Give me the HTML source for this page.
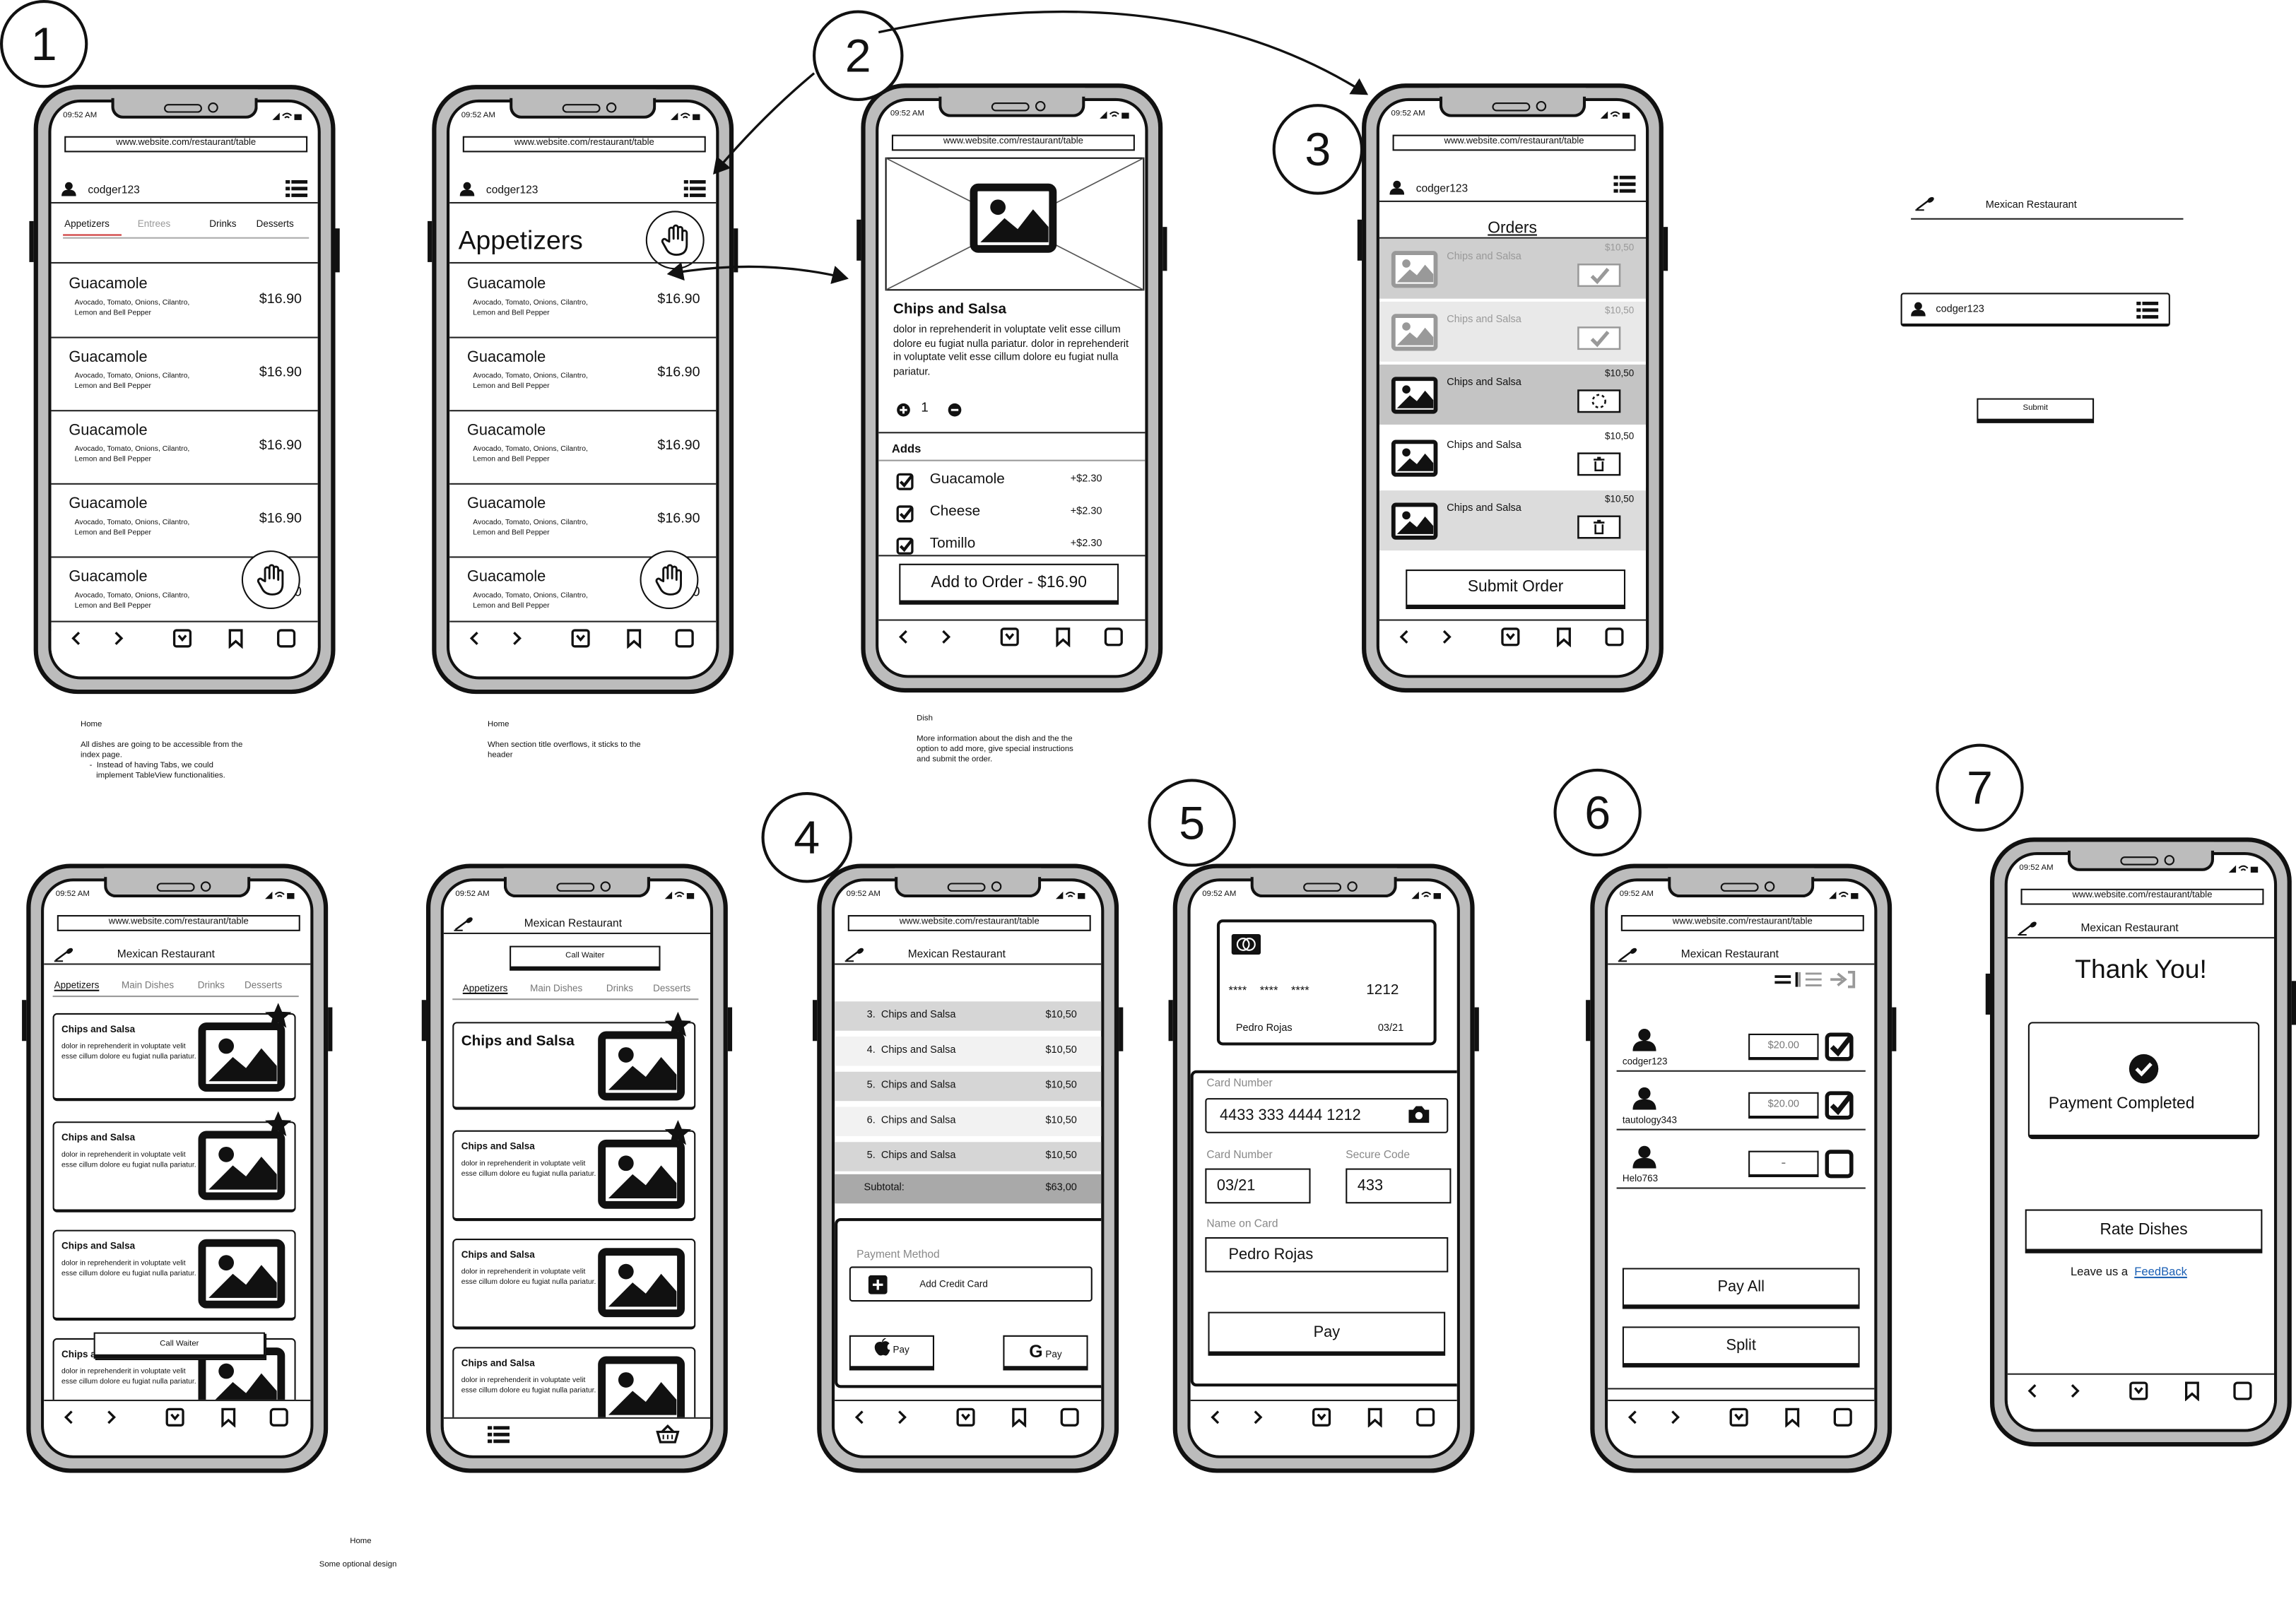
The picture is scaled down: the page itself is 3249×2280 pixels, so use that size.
<!DOCTYPE html>
<html><head><meta charset="utf-8">
<style>
html,body{margin:0;padding:0;background:#fff;width:3249px;height:2280px;overflow:hidden}
#w{position:absolute;left:0;top:0;width:1568px;height:1100px;transform:scale(2.0721);transform-origin:0 0;font-family:"Liberation Sans",sans-serif;color:#111}
.a{position:absolute;white-space:nowrap}
.ph{position:absolute;width:206px;height:416px;box-sizing:border-box;border:3px solid #111;border-radius:30px;background:#bcbcbc}
.sc{position:absolute;left:7px;top:7px;width:186px;height:396px;box-sizing:border-box;border:2px solid #111;border-radius:22px;background:#fff;overflow:hidden}
.in{position:absolute;left:0;top:-4px;width:186px;height:400px}
.ln{position:absolute;height:0;border-top:1.5px solid #222}
.bx{position:absolute;box-sizing:border-box;border:1.5px solid #111;background:#fff}
.btn{position:absolute;box-sizing:border-box;border:1.5px solid #111;border-bottom-width:3px;background:#fff;text-align:center}
.circ{position:absolute;border:2px solid #111;border-radius:50%;text-align:center;font-size:32px;background:#fff}
.note{position:absolute;font-size:5.5px;line-height:7px}
</style></head><body><div id="w"></div>
<script>
var W=document.getElementById('w'),H='';
function T(x,y,s,fs,ex){return '<div class="a" style="left:'+x+'px;top:'+y+'px;font-size:'+fs+'px;'+(ex||'')+'">'+s+'</div>'}
function L(x,y,w,ex){return '<div class="ln" style="left:'+x+'px;top:'+y+'px;width:'+w+'px;'+(ex||'')+'"></div>'}
function R(x,y,w,h,ex){return '<div class="a" style="left:'+x+'px;top:'+y+'px;width:'+w+'px;height:'+h+'px;'+(ex||'')+'"></div>'}
function B(x,y,w,h,s,fs,ex){return '<div class="btn" style="left:'+x+'px;top:'+y+'px;width:'+w+'px;height:'+h+'px;font-size:'+fs+'px;line-height:'+(h-4)+'px;'+(ex||'')+'">'+s+'</div>'}
function IMG(x,y,w,h,c){c=c||'#111';return '<svg class="a" style="left:'+x+'px;top:'+y+'px" width="'+w+'" height="'+h+'" viewBox="0 0 40 32"><rect x="2" y="2" width="36" height="28" rx="2" fill="#fff" stroke="'+c+'" stroke-width="3.5"/><circle cx="13" cy="11" r="3.5" fill="'+c+'"/><path d="M5 27 L16 16 L22 21 L29 12 L36 20 L36 27Z" fill="'+c+'"/></svg>'}
function USER(x,y,s){s=s||10;return '<svg class="a" style="left:'+x+'px;top:'+y+'px" width="'+s+'" height="'+s+'" viewBox="0 0 10 10"><circle cx="5" cy="3" r="2.6" fill="#111"/><path d="M0 10 Q0 5.5 5 5.5 Q10 5.5 10 10Z" fill="#111"/></svg>'}
function MENU(x,y){return '<svg class="a" style="left:'+x+'px;top:'+y+'px" width="15" height="12" viewBox="0 0 15 12"><g fill="#111"><rect x="0" y="0" width="3" height="2.4"/><rect x="4" y="0" width="11" height="2.4"/><rect x="0" y="4.6" width="3" height="2.4"/><rect x="4" y="4.6" width="11" height="2.4"/><rect x="0" y="9.2" width="3" height="2.4"/><rect x="4" y="9.2" width="11" height="2.4"/></g></svg>'}
function SPOON(x,y){return '<svg class="a" style="left:'+x+'px;top:'+y+'px" width="14" height="10" viewBox="0 0 14 10"><path d="M1 9 L9 3" stroke="#111" stroke-width="1.2"/><ellipse cx="10.5" cy="2.5" rx="2.5" ry="1.6" fill="#111" transform="rotate(-35 10.5 2.5)"/><path d="M0 9.5 L6 9.5" stroke="#111"/></svg>'}
function HAND(cx,cy){return '<div class="a" style="left:'+(cx-20)+'px;top:'+(cy-20)+'px;width:38px;height:38px;border:1.5px solid #111;border-radius:50%;background:#fff"></div><svg class="a" style="left:'+(cx-10)+'px;top:'+(cy-11)+'px" width="20" height="22" viewBox="0 0 20 22"><path d="M6 12 V4 a1.5 1.5 0 0 1 3 0 V10 V2.5 a1.5 1.5 0 0 1 3 0 V10 V3.5 a1.5 1.5 0 0 1 3 0 V11 V6 a1.5 1.5 0 0 1 3 0 V14 Q18 21 11 21 Q6 21 4 17 L1.5 12.5 a1.5 1.5 0 0 1 2.6-1.5Z" fill="#fff" stroke="#111" stroke-width="1.4" stroke-linejoin="round"/></svg>'}
function CHK(x,y,on){return '<svg class="a" style="left:'+x+'px;top:'+y+'px" width="12" height="12" viewBox="0 0 12 12"><rect x="1" y="1" width="10" height="10" rx="1.5" fill="#fff" stroke="#111" stroke-width="1.6"/>'+(on?'<path d="M3 6 L5.5 8.5 L11 1.5" fill="none" stroke="#111" stroke-width="2"/>':'')+'</svg>'}
function NAV(y,alt){
 var bg=R(0,y-12,186,60,'background:#fff');
 if(alt) return bg+L(0,y-12,186)+MENU(30,y-6)+'<svg class="a" style="left:145px;top:'+(y-7)+'px" width="16" height="13" viewBox="0 0 16 13"><path d="M1 5 H15 L13 12 H3Z M4 5 L8 1 L12 5" fill="none" stroke="#111" stroke-width="1.6"/><path d="M5 7 V10 M8 7 V10 M11 7 V10" stroke="#111"/></svg>';
 return bg+L(0,y-12,186)+'<svg class="a" style="left:0;top:'+(y-7)+'px" width="186" height="14" viewBox="0 0 186 14"><g fill="none" stroke="#111" stroke-width="1.6"><path d="M19 3 L15 7 L19 11"/><path d="M44 3 L48 7 L44 11"/><rect x="84" y="1.5" width="11" height="11" rx="1.5"/><path d="M87 5 L89.5 8 L92 5"/><path d="M122 1.5 H130 V12.5 L126 9 L122 12.5Z"/><rect x="155" y="1.5" width="11" height="11" rx="2"/></g></svg>'}
function PHONE(x,y,c,o){o=o||{};var s='<div class="ph" style="left:'+x+'px;top:'+y+'px"><div class="sc"><div class="in">';
 s+=T(8,10,'09:52 AM',5.5);
 s+='<svg class="a" style="left:150px;top:10px" width="22" height="7" viewBox="0 0 22 7"><path d="M1 6 L6 1 V6Z" fill="#111"/><path d="M8 3 Q11 0 14 3 M9.5 4.5 Q11 3 12.5 4.5" stroke="#111" fill="none"/><rect x="16" y="2" width="5" height="4" fill="#111"/></svg>';
 if(o.url!==false) s+='<div class="bx" style="left:9px;top:'+(o.uy||27)+'px;width:166px;height:11px;font-size:6.3px;line-height:8px;text-align:center">www.website.com/restaurant/table</div>';
 s+=c+(o.nonav?'':NAV(o.ny||370,o.alt))+'</div></div>';
 s+='<div class="a" style="left:50px;top:4px;width:100px;height:16px;background:#bcbcbc;border:2px solid #111;border-top:none;border-radius:0 0 8px 8px;box-sizing:border-box"></div><div class="a" style="left:50px;top:0;width:100px;height:6px;background:#bcbcbc"></div>';
 s+='<div class="a" style="left:86px;top:10px;width:24px;height:4px;border:1.5px solid #111;border-radius:3px"></div><div class="a" style="left:116px;top:8.5px;width:5px;height:5px;border:1.5px solid #111;border-radius:50%"></div>';
 s+='<div class="a" style="left:-6px;top:90px;width:3px;height:28px;background:#111"></div><div class="a" style="left:203px;top:95px;width:3px;height:30px;background:#111"></div>';
 return s+'</div>'}
var desc='Avocado, Tomato, Onions, Cilantro,<br>Lemon and Bell Pepper';
function item(y){return T(12,y+8,'Guacamole',10.5)+T(16,y+24,desc,5,'line-height:6.5px;white-space:normal;width:110px')+T(142,y+19,'$16.90',9.5)+L(0,y+50,186)}
var c=USER(7,58)+T(25,59,'codger123',7.5)+MENU(160,57)+L(0,72,186);
c+=T(9,84,'Appetizers',6.5)+T(59,84,'Entrees',6.5,'color:#999')+T(108,84,'Drinks',6.5)+T(140,84,'Desserts',6.5)+L(8,94,40,'border-color:#c33')+L(8,96,168,'border-color:#aaa;border-top-width:1px')+L(0,113,186);
for(var i=0;i<5;i++)c+=item(114+i*50);
c+=HAND(150,330);
H+=PHONE(23,58,c);
c=USER(7,58)+T(25,59,'codger123',7.5)+MENU(160,57)+L(0,72,186)+T(6,88,'Appetizers',18)+HAND(154,98)+L(0,113,186);
for(i=0;i<5;i++)c+=item(114+i*50);
c+=HAND(150,330);
H+=PHONE(295,58,c);
c='<svg class="a" style="left:4px;top:42px" width="178" height="92" viewBox="0 0 178 92"><rect x="1" y="1" width="176" height="90" fill="#fff" stroke="#111"/><path d="M1 1 L177 91 M177 1 L1 91" stroke="#555" stroke-width=".8"/></svg>'+IMG(62,60,60,48);
c+=T(10,141,'Chips and Salsa',10,'font-weight:bold')+T(10,156,'dolor in reprehenderit in voluptate velit esse cillum dolore eu fugiat nulla pariatur. dolor in reprehenderit in voluptate velit esse cillum dolore eu fugiat nulla pariatur.',7,'white-space:normal;width:168px;line-height:9.6px');
c+='<svg class="a" style="left:12px;top:209px" width="48" height="12" viewBox="0 0 48 12"><circle cx="5" cy="6" r="4.5" fill="#111"/><path d="M2.5 6 H7.5 M5 3.5 V8.5" stroke="#fff" stroke-width="1.4"/><circle cx="40" cy="6" r="4.5" fill="#111"/><path d="M37.5 6 H42.5" stroke="#fff" stroke-width="1.4"/></svg>'+T(29,208,'1',9);
c+=L(0,230,186)+T(9,237,'Adds',8,'font-weight:bold')+L(0,249,186,'border-color:#999');
var ad=['Guacamole','Cheese','Tomillo'];for(i=0;i<3;i++)c+=CHK(12,258+i*22,1)+T(35,257+i*22,ad[i],10)+T(131,259+i*22,'+$2.30',7);
c+=B(14,320,150,28,'Add to Order - $16.90',11)+L(0,314,186);
H+=PHONE(588,57,c);
c=USER(7,58)+T(25,59,'codger123',7.5)+MENU(160,55)+L(0,72,186)+T(74,85,'Orders',11,'text-decoration:underline')+L(0,97,186);
var rows=[['#cfcfcf',1,'c'],['#e9e9e9',1,'c'],['#c4c4c4',0,'s'],['#fff',0,'t'],['#dcdcdc',0,'t']];
for(i=0;i<5;i++){var y=98+i*43,r=rows[i];c+=R(0,y,186,41,'background:'+r[0]);c+=IMG(8,y+8,32,26,r[1]?'#999':'#111');c+=T(46,y+9,'Chips and Salsa',7,r[1]?'color:#999':'');c+=T(154,y+3,'$10,50',6.5,r[1]?'color:#999':'');
 var ic=r[2]=='c'?'<path d="M8 7 L11 10 L17 3" stroke="'+(r[1]?'#999':'#111')+'" stroke-width="2" fill="none"/>':r[2]=='s'?'<circle cx="12" cy="6.5" r="3.5" fill="none" stroke="#111" stroke-dasharray="1.5 1.5"/>':'<path d="M9 4 H15 M11 3 H13 M10 5 V10 H14 V5" stroke="#111" fill="none"/>';
 c+='<svg class="a" style="left:128px;top:'+(y+17)+'px" width="44" height="16" viewBox="0 0 24 13"><rect x=".5" y=".5" width="23" height="12" fill="#fff" stroke="'+(r[1]?'#999':'#111')+'"/>'+ic+'</svg>';}
c+=B(18,324,150,27,'Submit Order',11);
H+=PHONE(930,57,c);
function hdr(y){return SPOON(7,y-2)+T(50,y-2,'Mexican Restaurant',7.5)+L(0,y+9,186)}
function card(y,big,star){var s='<div class="bx" style="left:6px;top:'+y+'px;width:166px;height:'+(big||60)+'px;border-radius:3px;border-bottom-width:2.5px"></div>';
 s+=T(12,y+8,'Chips and Salsa',6.5,'font-weight:bold')+T(12,y+20,'dolor in reprehenderit in voluptate velit esse cillum dolore eu fugiat nulla pariatur.',5,'white-space:normal;width:96px;line-height:6.5px');
 s+=IMG(104,y+6,62,48);if(star)s+='<svg class="a" style="left:150px;top:'+(y-8)+'px" width="20" height="20" viewBox="0 0 20 20"><path d="M10 1 L12.6 7 L19 7.3 L14 11.5 L15.6 18 L10 14.4 L4.4 18 L6 11.5 L1 7.3 L7.4 7Z" fill="#111"/></svg>';return s}
c=hdr(51)+T(7,72,'Appetizers',6.5,'text-decoration:underline')+T(53,72,'Main Dishes',6.5,'color:#777')+T(105,72,'Drinks',6.5,'color:#777')+T(137,72,'Desserts',6.5,'color:#777')+L(6,82,168,'border-color:#999;border-top-width:1px');
c+=card(94,60,1)+card(168,62,1)+card(242,62)+card(316,60)+B(34,312,117,18,'Call Waiter',5.5,'box-shadow:1px 1px 0 #111');
H+=PHONE(18,590,c,{uy:27});
c=SPOON(7,28)+T(55,28,'Mexican Restaurant',7.5)+L(0,39,186)+B(45,48,103,17,'Call Waiter',5.5)+T(13,74,'Appetizers',6.5,'text-decoration:underline')+T(59,74,'Main Dishes',6.5,'color:#777')+T(111,74,'Drinks',6.5,'color:#777')+T(143,74,'Desserts',6.5,'color:#777')+L(6,84,168,'border-color:#999;border-top-width:1px');
c+=card(100,60,1).replace(T(12,108,'Chips and Salsa',6.5,'font-weight:bold'),T(12,108,'Chips and Salsa',10,'font-weight:bold')).replace(/dolor in reprehenderit in voluptate velit esse cillum dolore eu fugiat nulla pariatur\./,'');
c+=card(174,62,1)+card(248,62)+card(322,60);
H+=PHONE(291,590,c,{url:false,alt:1,ny:382});
c=hdr(51);var it=['3.','4.','5.','6.','5.'];
for(i=0;i<5;i++){var yy=86+i*24;c+=R(0,yy,186,20,'background:'+(i%2?'#f2f2f2':'#d6d6d6'))+T(22,yy+6,it[i]+'&nbsp;&nbsp;Chips and Salsa',7)+T(144,yy+6,'$10,50',7)}
c+=R(0,204,186,20,'background:#a9a9a9')+T(20,210,'Subtotal:',7)+T(144,210,'$63,00',7);
c+='<div class="bx" style="left:0;top:234px;width:186px;height:116px;border-width:2px;border-radius:4px"></div>'+T(15,254,'Payment Method',7.5,'color:#888');
c+='<div class="bx" style="left:10px;top:267px;width:166px;height:24px;border-radius:2px"></div><svg class="a" style="left:23px;top:273px" width="13" height="13" viewBox="0 0 13 13"><rect width="13" height="13" rx="2" fill="#111"/><path d="M3 6.5 H10 M6.5 3 V10" stroke="#fff" stroke-width="1.6"/></svg>'+T(58,276,'Add Credit Card',6.5);
var apple='<svg width="11" height="12" viewBox="0 0 11 12" style="vertical-align:-2px"><path d="M5.5 3 Q8 1.5 10 3.5 Q8 5 9 7.5 Q10 8.5 10.5 8 Q9 12 7.5 11.5 Q6 11 5.5 11.3 Q4 12 3 11 Q0 8 0.8 5 Q2 2 5.5 3Z M5.5 2.5 Q6 0.5 8 0" fill="#111" stroke="#111" stroke-width=".6"/></svg>';
c+=B(10,314,58,24,apple+' Pay',6.5)+B(115,314,58,24,'<b style="font-size:12px">G</b> Pay',6.5);
H+=PHONE(558,590,c);
c='<div class="bx" style="left:18px;top:30px;width:150px;height:86px;border-width:2px;border-radius:4px"></div><svg class="a" style="left:28px;top:40px" width="20" height="14" viewBox="0 0 20 14"><rect width="20" height="14" rx="1.5" fill="#111"/><circle cx="8" cy="7" r="4" fill="none" stroke="#fff"/><circle cx="12" cy="7" r="4" fill="none" stroke="#fff"/></svg>';
c+=T(26,74,'****&nbsp;&nbsp;&nbsp;&nbsp;****&nbsp;&nbsp;&nbsp;&nbsp;****',8)+T(120,73,'1212',10)+T(31,101,'Pedro Rojas',7)+T(128,101,'03/21',7);
c+='<div class="bx" style="left:0;top:133px;width:186px;height:216px;border-width:2px;border-radius:4px"></div>'+T(11,137,'Card Number',7.5,'color:#888');
c+='<div class="bx" style="left:10px;top:152px;width:166px;height:24px;border-radius:2px;border-width:1.5px"></div>'+T(20,158,'4433 333 4444 1212',10.5)+'<svg class="a" style="left:149px;top:157px" width="14" height="12" viewBox="0 0 14 12"><path d="M0 3 H3 L5 0.5 H9 L11 3 H14 V12 H0Z" fill="#111"/><circle cx="7" cy="7" r="2.5" fill="#fff"/></svg>';
c+=T(11,186,'Card Number',7.5,'color:#888')+T(106,186,'Secure Code',7.5,'color:#888');
c+='<div class="bx" style="left:10px;top:200px;width:72px;height:24px"></div>'+T(18,206,'03/21',10.5)+'<div class="bx" style="left:106px;top:200px;width:72px;height:24px"></div>'+T(114,206,'433',10.5);
c+=T(11,233,'Name on Card',7.5,'color:#888')+'<div class="bx" style="left:10px;top:247px;width:166px;height:24px"></div>'+T(26,253,'Pedro Rojas',10.5);
c+=B(12,298,162,30,'Pay',10.5);
H+=PHONE(801,590,c,{url:false});
c=hdr(51)+'<svg class="a" style="left:112px;top:64px" width="62" height="14" viewBox="0 0 62 14"><path d="M2 5 H13 M2 9 H13 M17 2 V12" stroke="#111" stroke-width="1.8"/><path d="M23 3 H34 M23 7 H34 M23 11 H34 M19 2 V12" stroke="#999" stroke-width="1.4"/><path d="M40 7 H48 M45 3 L50 7 L45 11 M52 2 H56 V12 H52" stroke="#999" stroke-width="1.8" fill="none"/></svg>';
var us=['codger123','tautology343','Helo763'],vs=['$20.00','$20.00','-'];
for(i=0;i<3;i++){var y=104+i*40;c+=USER(17,y,16)+T(10,y+20,us[i],6.5)+'<div class="bx" style="left:96px;top:'+(y+4)+'px;width:48px;height:18px;border-bottom-width:2.5px;font-size:'+(i==2?10:7)+'px;text-align:center;line-height:16px;color:#777">'+vs[i]+'</div>'+CHK(148,y+3,i<2).replace('width="12" height="12"','width="20" height="20"')+L(6,y+29,170)}
c+=B(10,268,162,28,'Pay All',10.5)+B(10,308,162,28,'Split',10.5)+L(0,350,186);
H+=PHONE(1086,590,c);
c=hdr(51)+T(46,72,'Thank You!',18)+'<div class="bx" style="left:14px;top:118px;width:158px;height:80px;border-width:1.5px;border-bottom-width:3px;border-radius:3px"></div><svg class="a" style="left:82px;top:139px" width="22" height="22" viewBox="0 0 22 22"><circle cx="11" cy="11" r="10" fill="#111"/><path d="M6 11 L9.5 14.5 L16 7.5" stroke="#fff" stroke-width="2.4" fill="none"/></svg>'+T(28,168,'Payment Completed',11);
c+=B(12,246,162,30,'Rate Dishes',11)+T(43,284,'Leave us a&nbsp; <span style="color:#1a5fb4;text-decoration:underline">FeedBack</span>',8);
H+=PHONE(1359,572,c);
[[0,0,56,'1'],[555,7,58,'2'],[869,71,58,'3'],[520,541,58,'4'],[784,532,56,'5'],[1061,525,56,'6'],[1322,508,56,'7']].forEach(function(k){H+='<div class="circ" style="left:'+k[0]+'px;top:'+k[1]+'px;width:'+k[2]+'px;height:'+k[2]+'px;line-height:'+k[2]+'px">'+k[3]+'</div>'});
H+='<svg class="a" style="left:0;top:0" width="1568" height="1100"><defs><marker id="m" markerWidth="8" markerHeight="8" refX="6" refY="4" orient="auto"><path d="M0 0 L7 4 L0 8Z" fill="#111"/></marker><marker id="m2" markerWidth="8" markerHeight="8" refX="2" refY="4" orient="auto"><path d="M8 0 L1 4 L8 8Z" fill="#111"/></marker></defs><g fill="none" stroke="#111" stroke-width="1.6"><path d="M556 50 Q520 80 488 118" marker-end="url(#m)"/><path d="M600 22 Q800 -20 933 64" marker-end="url(#m)"/><path d="M457 187 Q520 176 578 190" marker-end="url(#m)" marker-start="url(#m2)"/></g></svg>';
H+=SPOON(1308,134)+T(1356,137,'Mexican Restaurant',7)+L(1305,149,186,'border-top-width:1px');
H+='<div class="bx" style="left:1298px;top:200px;width:184px;height:23px;border-bottom-width:2.5px;border-radius:2px"></div>'+USER(1305,206)+T(1322,208,'codger123',7)+MENU(1459,206);
H+=B(1350,272,80,17,'Submit',5.5);
H+='<div class="note" style="left:55px;top:492px">Home<br><br>All dishes are going to be accessible from the<br>index page.<br>&nbsp;&nbsp;&nbsp;&nbsp;- &nbsp;Instead of having Tabs, we could<br>&nbsp;&nbsp;&nbsp;&nbsp;&nbsp;&nbsp;&nbsp;implement TableView functionalities.</div>';
H+='<div class="note" style="left:333px;top:492px">Home<br><br>When section title overflows, it sticks to the<br>header</div>';
H+='<div class="note" style="left:626px;top:488px">Dish<br><br>More information about the dish and the the<br>option to add more, give special instructions<br>and submit the order.</div>';
H+='<div class="note" style="left:239px;top:1050px">Home</div><div class="note" style="left:218px;top:1066px">Some optional design</div>';
W.innerHTML=H;
</script></body></html>
